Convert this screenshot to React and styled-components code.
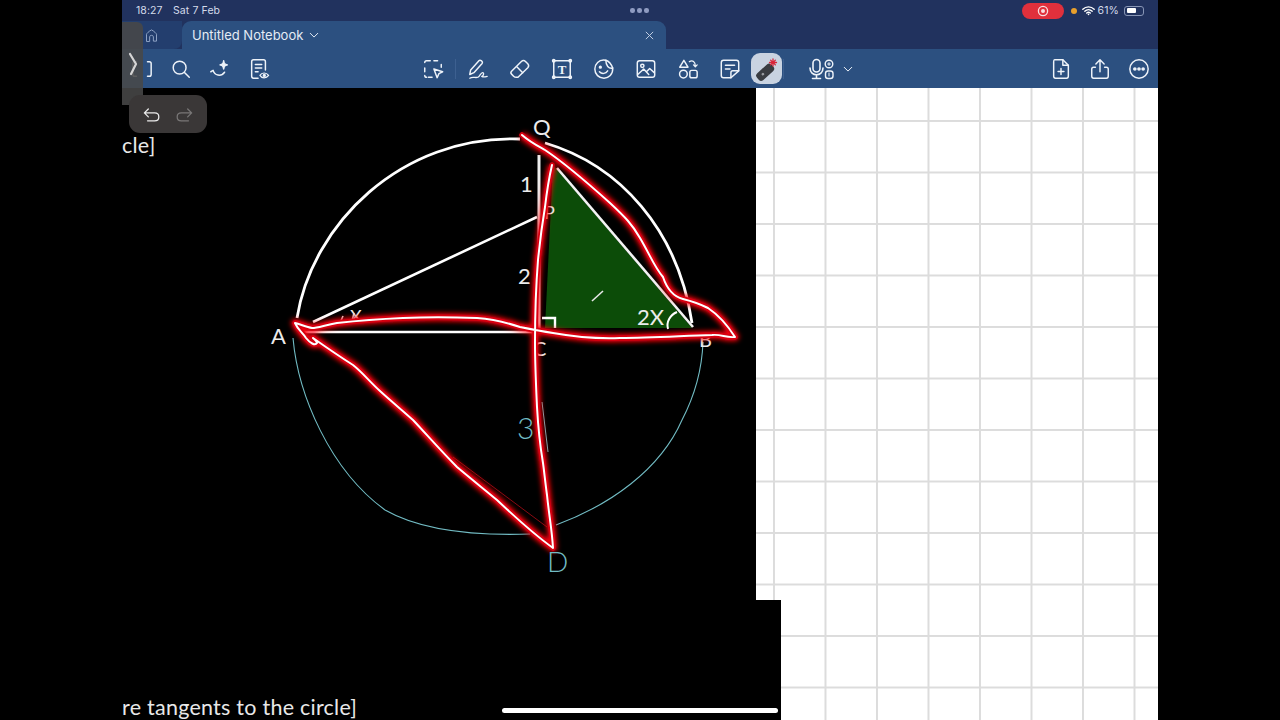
import React from 'react';
import styled, { createGlobalStyle } from 'styled-components';

const GlobalStyle = createGlobalStyle`
  html, body {
    margin: 0;
    height: 100%;
    background: #000;
    font-family: Inter, "Liberation Sans", sans-serif;
  }
`;

const Page = styled.div`
  width: 1280px;
  height: 720px;
  display: flex;
  justify-content: flex-start;
  overflow: hidden;
  background: #000;
`;

const Device = styled.div`
  position: relative;
  width: 1036px;
  height: 720px;
  margin-left: 122px;
  display: flex;
  flex-direction: column;
  overflow: hidden;
`;

const StatusBar = styled.div`
  height: 21px;
  flex: none;
  display: flex;
  align-items: center;
  padding: 0 14px;
  background: #21325e;
  color: #d3dbea;
  font-size: 10.5px;
  letter-spacing: 0.1px;
`;

const Clock = styled.span`
  width: 37px;
`;

const StatusDots = styled.div`
  display: flex;
  gap: 2.5px;
  margin-left: 410px;
`;

const StatusDot = styled.i`
  width: 4.5px;
  height: 4.5px;
  border-radius: 50%;
  background: #8f9cc2;
`;

const StatusRight = styled.div`
  margin-left: auto;
  display: flex;
  align-items: center;
`;

const RecordPill = styled.div`
  width: 42px;
  height: 16px;
  border-radius: 8px;
  background: #e0303c;
  display: flex;
  align-items: center;
  justify-content: center;
`;

const OrangeDot = styled.i`
  width: 6px;
  height: 6px;
  border-radius: 50%;
  background: #e9a02c;
  margin: 0 5px 0 7px;
`;

const Percent = styled.span`
  margin: 0 5px 0 3px;
`;

const Battery = styled.div`
  width: 20px;
  height: 10px;
  padding: 1.5px;
  box-sizing: border-box;
  border: 1px solid #8795b5;
  border-radius: 3px;
`;

const BatteryFill = styled.div`
  width: 61%;
  height: 100%;
  border-radius: 1px;
  background: #fff;
`;

const TabBar = styled.div`
  height: 28px;
  flex: none;
  display: flex;
  background: #21325e;
`;

const HomeTab = styled.div`
  width: 60px;
  display: flex;
  align-items: center;
  padding-left: 22px;
  box-sizing: border-box;
  background: #233e6e;
  border-radius: 0 0 8px 0;
  color: #8ea2c4;
`;

const ActiveTab = styled.div`
  width: 484px;
  display: flex;
  align-items: center;
  padding: 0 12px 0 10px;
  box-sizing: border-box;
  background: #2c5080;
  border-radius: 9px 9px 0 0;
  color: #e4ebf5;
  font-size: 13px;
`;

const TabTitle = styled.span`
  margin-right: 6px;
`;

const TabClose = styled.div`
  margin-left: auto;
  display: flex;
  color: #c3d0e3;
`;

const Toolbar = styled.div`
  height: 39px;
  flex: none;
  display: flex;
  align-items: center;
  background: #2c5080;
  color: #eef3f9;
`;

const ToolGroup = styled.div`
  display: flex;
  align-items: center;
  margin-left: ${(p) => p.$offset || 0}px;
`;

const Tool = styled.div`
  width: ${(p) => p.$width || 42}px;
  height: 31px;
  flex: none;
  display: flex;
  align-items: center;
  justify-content: center;
  border-radius: 9px;
  background: ${(p) => (p.$active ? '#c9d3e1' : 'transparent')};
`;

const Separator = styled.i`
  width: 1px;
  height: 20px;
  flex: none;
  margin: 0 1px;
  background: #3d6090;
`;

const Canvas = styled.div`
  position: relative;
  flex: 1;
  min-height: 0;
  background-color: #fff;
  background-image:
    linear-gradient(to right, #dcdcdc 2px, transparent 2px),
    linear-gradient(to bottom, #dcdcdc 2px, transparent 2px);
  background-size: 51.5px 51.5px;
  background-position: 33px 32px;
`;

const SheetTop = styled.div`
  width: 634px;
  height: 512px;
  box-sizing: border-box;
  padding-top: 44px;
  background: #000;
`;

const SheetBottom = styled.div`
  width: 659px;
  height: 120px;
  display: flex;
  align-items: flex-end;
  background: #000;
`;

const Caption = styled.div`
  color: #e8e8e8;
  font-family: Lato, "Open Sans", sans-serif;
  font-size: 21.5px;
  line-height: 26px;
  letter-spacing: 0.25px;
  white-space: nowrap;
`;

const Drawing = styled.svg`
  position: absolute;
  left: 0;
  top: 0;
  width: 634px;
  height: 512px;
  font-family: Lato, "Open Sans", sans-serif;
`;

const Handle = styled.div`
  position: absolute;
  left: 0;
  top: 22px;
  width: 21px;
  height: 83px;
  display: flex;
  align-items: center;
  justify-content: center;
  border-radius: 0 6px 0 0;
  background: rgba(72, 72, 72, 0.88);
  color: #d5d5d5;
`;

const UndoPill = styled.div`
  position: absolute;
  left: 7px;
  top: 95px;
  width: 78px;
  height: 38px;
  display: flex;
  align-items: center;
  justify-content: space-around;
  padding: 0 6px;
  box-sizing: border-box;
  border-radius: 11px;
  background: #3a3737;
  color: #ececec;
`;

const HomeBar = styled.div`
  position: absolute;
  left: 380px;
  bottom: 7px;
  width: 276px;
  height: 5px;
  border-radius: 3px;
  background: #fff;
`;

const Svg = styled.svg`
  display: block;
  flex: none;
  fill: none;
  stroke: currentColor;
  stroke-width: 1.6;
  stroke-linecap: round;
  stroke-linejoin: round;
`;

const Icon = ({ size = 24, box = 24, children }) => (
  <Svg width={size} height={size} viewBox={`0 0 ${box} ${box}`}>{children}</Svg>
);

const CYAN_ARC = 'M293 338 C298 395 330 470 385 510 C420 530 470 536 530 534 M556 525 C610 505 660 470 682 420 C695 395 702 370 703 342';
const WHITE_ARC = 'M297 318 C312 225 400 135 520 139 M545 143 C620 165 678 230 692 323';
const INK = 'M522 135 C530 142 536 145 545 150 C560 160 590 185 610 203 C625 217 632 224 640 238 C650 255 655 268 663 277 C668 292 675 297 683 299 C695 302 702 305 708 308 C720 316 728 326 735 337 C725 338 722 334 712 335 C680 336 650 338 620 338 C595 339 570 336 553 333 C540 331 530 329 520 327 C505 322 490 319 477 318 C450 317 425 317 403 318 C380 319 355 321 337 323 C325 325 318 328 312 328 C306 327 300 324 295 323 C298 330 302 332 306 338 C310 343 315 346 317 343 C316 340 314 339 313 338 C330 350 342 358 353 365 C362 372 370 382 380 391 C392 402 402 410 413 420 C428 436 442 452 457 467 C470 478 485 490 497 500 C515 517 535 535 553 548 C552 530 549 515 547 495 C545 480 544 470 543 463 C540 445 538 425 537 407 C536 385 535 365 535 343 C535 315 536 285 538 260 C540 240 542 225 545 207 C547 190 549 178 552 165';

const Geometry = () => (
  <Drawing viewBox="122 88 634 512">
    <defs>
      <filter id="glow" x="-10%" y="-10%" width="120%" height="120%">
        <feGaussianBlur stdDeviation="2.6" />
      </filter>
    </defs>
    <path d={CYAN_ARC} fill="none" stroke="#72bcc4" strokeWidth="1.1" />
    <path d="M542 402 L548 452" fill="none" stroke="#72bcc4" strokeWidth="1" />
    <polygon points="553,165 545,328 692,328" fill="#0c4c08" />
    <path d={WHITE_ARC} fill="none" stroke="#fff" strokeWidth="2.8" />
    <path d="M313 322 L537 217" stroke="#fff" strokeWidth="2.6" />
    <path d="M304 332 L545 332" stroke="#fff" strokeWidth="2.6" />
    <path d="M539 155 L539 330" stroke="#eee" strokeWidth="3" />
    <path d="M557 168 L693 327" stroke="#f4f4f4" strokeWidth="2.6" />
    <path d="M542 318 L555 318 L555 328" fill="none" stroke="#fff" strokeWidth="2.4" />
    <path d="M668 329 C666 322 670 315 677 312" fill="none" stroke="#fff" strokeWidth="2" />
    <path d="M592 301 L603 291" stroke="#e8e8e8" strokeWidth="1.6" />
    <path d="M340 323 L343 316 M352 321 L354 313" stroke="#e8e8e8" strokeWidth="1.6" />
    <path d="M453 457 L547 527" stroke="#8a0a12" strokeWidth="1" />
    <g fill="#ececec" fontSize="22">
      <text x="533" y="135">Q</text>
      <text x="520" y="192">1</text>
      <text x="518" y="284">2</text>
      <text x="271" y="344">A</text>
      <text x="637" y="325">2X</text>
      <text x="350" y="323" fontSize="18">X</text>
      <text x="544" y="219" fontSize="18">P</text>
      <text x="533" y="356" fontSize="20">C</text>
      <text x="699" y="347" fontSize="20">B</text>
    </g>
    <path d={INK} fill="none" stroke="#ff0010" strokeWidth="8" strokeLinejoin="round" filter="url(#glow)" />
    <path d={INK} fill="none" stroke="#d80010" strokeWidth="5.5" strokeLinejoin="round" strokeLinecap="round" />
    <path d={INK} fill="none" stroke="#fff" strokeWidth="2" strokeLinejoin="round" strokeLinecap="round" />
    <g fill="#72bcc4" fontWeight="300">
      <text x="517" y="439" fontSize="30">3</text>
      <text x="547" y="572" fontSize="28">D</text>
    </g>
  </Drawing>
);

const Laser = () => (
  <Svg width="24" height="24" viewBox="0 0 24 24">
    <g transform="rotate(-42 10 15)">
      <rect x="1" y="11.5" width="18" height="7.5" rx="2.5" fill="#3a3d42" stroke="#3a3d42" />
      <circle cx="7" cy="15.2" r="1.3" fill="#9a9da2" stroke="none" />
    </g>
    <g stroke="#d9263a" strokeWidth="1.3">
      <path d="M18 2 V9 M14.5 5.5 H21.5 M15.6 3.1 L20.4 7.9 M20.4 3.1 L15.6 7.9" />
    </g>
  </Svg>
);

export default function App() {
  return (
    <Page>
      <GlobalStyle />
      <Device>
        <StatusBar>
          <Clock>18:27</Clock>
          <span>Sat 7 Feb</span>
          <StatusDots>
            <StatusDot />
            <StatusDot />
            <StatusDot />
          </StatusDots>
          <StatusRight>
            <RecordPill>
              <Svg width="12" height="12" viewBox="0 0 12 12">
                <circle cx="6" cy="6" r="4.6" stroke="#f8dfe0" strokeWidth="1.3" />
                <circle cx="6" cy="6" r="2" fill="#f8dfe0" stroke="none" />
              </Svg>
            </RecordPill>
            <OrangeDot />
            <Svg width="13" height="11" viewBox="0 0 16 12">
              <path d="M1 4.4 C5 .6 11 .6 15 4.4 M3.4 6.8 C6 4.4 10 4.4 12.6 6.8 M5.8 9 C7 8 9 8 10.2 9" stroke="#fff" strokeWidth="1.7" />
              <circle cx="8" cy="10.8" r="1" fill="#fff" stroke="none" />
            </Svg>
            <Percent>61%</Percent>
            <Battery>
              <BatteryFill />
            </Battery>
          </StatusRight>
        </StatusBar>
        <TabBar>
          <HomeTab>
            <Icon size={15}>
              <path d="M4 21 V10 C4 9 8 5 12 3 C16 5 20 9 20 10 V21 H15 V14 C15 11 9 11 9 14 V21 Z" />
            </Icon>
          </HomeTab>
          <ActiveTab>
            <TabTitle>Untitled Notebook</TabTitle>
            <Icon size={10}>
              <path d="M3 8 L12 17 L21 8" strokeWidth="2.4" />
            </Icon>
            <TabClose>
              <Icon size={9}>
                <path d="M3 3 L21 21 M21 3 L3 21" strokeWidth="2.6" />
              </Icon>
            </TabClose>
          </ActiveTab>
        </TabBar>
        <Toolbar>
          <ToolGroup>
            <Tool $width={39}>
              <Icon size={22}>
                <path d="M6 4 H4 C3 4 2 5 2 6 V18 C2 19 3 20 4 20 H6 M18 4 H20 C21 4 22 5 22 6 V18 C22 19 21 20 20 20 H18" />
              </Icon>
            </Tool>
            <Tool $width={39}>
              <Icon size={22}>
                <circle cx="10.5" cy="10.5" r="7" />
                <path d="M15.8 15.8 L21 21" />
              </Icon>
            </Tool>
            <Tool $width={39}>
              <Icon size={22}>
                <path d="M2 15 L4.5 13.5 C6 19 13 21 17 15.5" />
                <path d="M16 3 C16.5 6 17 7 20 7.5 C17 8 16.5 9 16 12 C15.5 9 15 8 12 7.5 C15 7 15.5 6 16 3 Z" fill="currentColor" />
              </Icon>
            </Tool>
            <Tool $width={39}>
              <Icon size={22}>
                <path d="M11 22 H6 C4.5 22 4 21 4 20 V4 C4 3 5 2 6 2 H17 C18.5 2 19 3 19 4 V13" />
                <path d="M8 7 H15 M8 11 H15 M8 15 H11" />
                <path d="M13 19 C15 15.5 20 15.5 22.5 19 C20 22.5 15 22.5 13 19 Z" strokeWidth="1.3" />
                <circle cx="17.8" cy="19" r="1" fill="currentColor" />
              </Icon>
            </Tool>
          </ToolGroup>
          <ToolGroup $offset={134}>
            <Tool>
              <Icon size={22}>
                <path d="M11 21 H7 M3 15 V9 M5 3 H9 M13 3 H17 M21 7 V10 M5 3 C3.5 3 3 4 3 5 M3 19 C3 20 3.5 21 5 21" strokeDasharray="4 2.5" />
                <path d="M13 12 L22.5 15 L18.5 17 L16.5 21.5 Z" />
              </Icon>
            </Tool>
            <Separator />
            <Tool>
              <Icon size={22}>
                <path d="M3 18 L4 13 L13 3 C14.5 1.5 18 4 16.5 6 L7.5 16 Z" />
                <path d="M3 22 C6 20 9 22 12 21 C14 20 15 16 17 16 C19 16 18 20 16 20 C18.5 21.5 20 20.5 22 20" strokeWidth="1.4" />
              </Icon>
            </Tool>
            <Tool>
              <Icon size={22}>
                <path d="M2.8 14.5 L13.5 3.8 C15 2.4 16.5 2.4 18 3.8 L20.5 6.3 C21.8 7.8 21.8 9.2 20.5 10.7 L9.8 21 H8 C6.5 21 5.8 20.6 5 19.8 L2.8 17.6 C1.8 16.6 1.8 15.5 2.8 14.5 Z" />
                <path d="M8.5 9.5 L15 16" />
              </Icon>
            </Tool>
            <Tool>
              <Icon size={22}>
                <rect x="3" y="3" width="18" height="18" />
                <circle cx="3" cy="3" r="1.3" />
                <circle cx="21" cy="3" r="1.3" />
                <circle cx="3" cy="21" r="1.3" />
                <circle cx="21" cy="21" r="1.3" />
                <text x="12" y="17" textAnchor="middle" fontSize="14" fontWeight="700" fontFamily="'Liberation Serif', serif" fill="currentColor" stroke="none">T</text>
              </Icon>
            </Tool>
            <Tool>
              <Icon size={22}>
                <path d="M14 2.5 C6 1 2 7 2 12 C2 18 6.5 22 12 22 C17 22 22 18 21.5 11 C17 12 14 8 14 2.5 Z" />
                <path d="M14 2.5 C17 3.5 20 7 21.5 11" />
                <circle cx="8" cy="10" r="1" fill="currentColor" />
                <path d="M7 15 C10 18 14 17 16 14" />
              </Icon>
            </Tool>
            <Tool>
              <Icon size={22}>
                <rect x="2.5" y="3" width="19" height="18" rx="2.5" />
                <circle cx="8" cy="8.5" r="1.8" />
                <path d="M3 18 L9.5 12 L15 18 M12.5 15 L16 11.5 L21 16" />
              </Icon>
            </Tool>
            <Tool>
              <Icon size={22}>
                <path d="M7.5 2.5 L12 10 H3 Z" />
                <circle cx="7" cy="17.5" r="4.2" />
                <rect x="14" y="13.5" width="8" height="8" rx="2" />
                <path d="M13.5 4 C17 2 20 4 20 9 M18 7.5 L20 9.5 L22 7.5" strokeWidth="1.4" />
              </Icon>
            </Tool>
            <Tool>
              <Icon size={22}>
                <path d="M13 21.5 H5 C3.5 21.5 2.5 20.5 2.5 19 V5 C2.5 3.5 3.5 2.5 5 2.5 H19 C20.5 2.5 21.5 3.5 21.5 5 V14 Z" />
                <path d="M13 21.5 V16 C13 15 14 14 15 14 H21.5" />
                <path d="M7 8 H17 M7 12 H12" />
              </Icon>
            </Tool>
            <Tool $active $width={31}>
              <Laser />
            </Tool>
            <Separator />
            <Tool $width={24} />
            <Tool $width={34}>
              <Svg width="34" height="22" viewBox="0 0 34 22">
                <rect x="4" y="1.5" width="7" height="12.5" rx="3.5" />
                <path d="M1 10 C1 19 14 19 14 10 M7.5 17 V20.5 M3.5 20.5 H11.5" />
                <circle cx="20" cy="6" r="3.8" strokeWidth="1.4" />
                <rect x="16.5" y="13" width="7.5" height="7.5" rx="2.5" strokeWidth="1.4" />
                <path d="M18.6 6 H21.4 M20 4.6 V7.4 M20 15 V18" strokeWidth="1" />
              </Svg>
            </Tool>
            <Icon size={10}>
              <path d="M3 8 L12 17 L21 8" strokeWidth="2.4" />
            </Icon>
          </ToolGroup>
          <ToolGroup style={{ marginLeft: 'auto' }}>
            <Tool $width={39}>
              <Icon size={22}>
                <path d="M5 2 H14 L20 8 V20 C20 21 19 22 18 22 H6 C5 22 4 21 4 20 V4 C4 3 4.5 2 5 2 Z" />
                <path d="M14 2 V8 H20 M12 11.5 V18 M8.8 14.8 H15.2" />
              </Icon>
            </Tool>
            <Tool $width={39}>
              <Icon size={22}>
                <path d="M12 15 V2.5 M7.5 6.5 L12 2 L16.5 6.5" />
                <path d="M7 10 H5 C3.5 10 3 11 3 12 V20 C3 21 3.5 22 5 22 H19 C20.5 22 21 21 21 20 V12 C21 11 20.5 10 19 10 H17" />
              </Icon>
            </Tool>
            <Tool $width={39}>
              <Icon size={22}>
                <circle cx="12" cy="12" r="10" />
                <circle cx="7.5" cy="12" r="1.2" fill="currentColor" />
                <circle cx="12" cy="12" r="1.2" fill="currentColor" />
                <circle cx="16.5" cy="12" r="1.2" fill="currentColor" />
              </Icon>
            </Tool>
          </ToolGroup>
        </Toolbar>
        <Canvas>
          <SheetTop>
            <Caption>cle]</Caption>
          </SheetTop>
          <SheetBottom>
            <Caption>re tangents to the circle]</Caption>
          </SheetBottom>
          <Geometry />
        </Canvas>
        <Handle>
          <Svg width="10" height="24" viewBox="0 0 10 24">
            <path d="M2 2 L8 12 L3 22" strokeWidth="2.2" />
          </Svg>
        </Handle>
        <UndoPill>
          <Icon size={19}>
            <path d="M8 5 L3 10 L8 15 M3 10 H16 C23 10 23 20 16 20 H7" />
          </Icon>
          <span style={{ opacity: 0.35, display: 'flex' }}>
            <Icon size={19}>
              <path d="M16 5 L21 10 L16 15 M21 10 H8 C1 10 1 20 8 20 H17" />
            </Icon>
          </span>
        </UndoPill>
        <HomeBar />
      </Device>
    </Page>
  );
}
